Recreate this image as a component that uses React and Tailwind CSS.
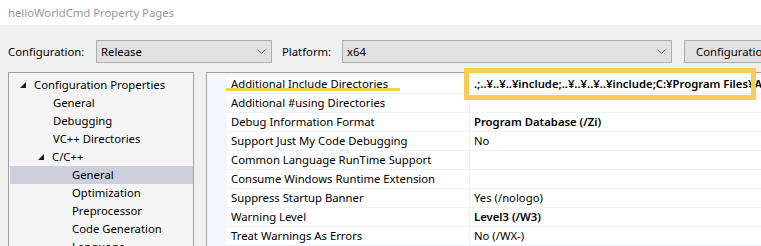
import React from 'react';

const font = { fontFamily: '"Noto Sans", "Open Sans", sans-serif' };

const tree = [
  { label: 'Configuration Properties', indent: 0, toggle: true },
  { label: 'General', indent: 1 },
  { label: 'Debugging', indent: 1 },
  { label: 'VC++ Directories', indent: 1 },
  { label: 'C/C++', indent: 1, toggle: true },
  { label: 'General', indent: 2, selected: true },
  { label: 'Optimization', indent: 2 },
  { label: 'Preprocessor', indent: 2 },
  { label: 'Code Generation', indent: 2 },
  { label: 'Language', indent: 2 },
];

const props = [
  { name: 'Additional Include Directories', value: '.;..¥..¥..¥include;..¥..¥..¥..¥include;C:¥Program Files¥Au', bold: true },
  { name: 'Additional #using Directories', value: '' },
  { name: 'Debug Information Format', value: 'Program Database (/Zi)', bold: true },
  { name: 'Support Just My Code Debugging', value: 'No' },
  { name: 'Common Language RunTime Support', value: '' },
  { name: 'Consume Windows Runtime Extension', value: '' },
  { name: 'Suppress Startup Banner', value: 'Yes (/nologo)' },
  { name: 'Warning Level', value: 'Level3 (/W3)', bold: true },
  { name: 'Treat Warnings As Errors', value: 'No (/WX-)' },
];

function Chevron() {
  return (
    <svg width="9" height="5" viewBox="0 0 9 5" className="shrink-0">
      <polyline points="0.5,0.5 4.5,4.5 8.5,0.5" fill="none" stroke="#606060" strokeWidth="1" />
    </svg>
  );
}

function Triangle() {
  return (
    <svg width="6" height="6" viewBox="0 0 6 6" className="shrink-0">
      <polygon points="6,0 6,6 0,6" fill="#1e1e1e" />
    </svg>
  );
}

export default function App() {
  return (
    <div className="w-[761px] h-[246px] overflow-hidden bg-[#f0f0f0] text-[11.3px] text-black leading-none" style={font}>
      {/* Title */}
      <div className="h-[25px] bg-white flex items-center pl-[8px] text-[#999999]">helloWorldCmd Property Pages</div>

      {/* Configuration row */}
      <div className="flex items-center h-[23px] mt-[15px] pl-[8px] whitespace-nowrap">
        <span className="w-[88px] shrink-0">Configuration:</span>
        <div className="w-[176px] h-[23px] shrink-0 bg-[#e1e1e1] border border-[#adadad] flex items-center justify-between pl-[4px] pr-[5px]">
          <span>Release</span>
          <Chevron />
        </div>
        <span className="ml-[10px] w-[60px] shrink-0">Platform:</span>
        <div className="w-[330px] h-[23px] shrink-0 bg-[#e1e1e1] border border-[#adadad] flex items-center justify-between pl-[4px] pr-[5px]">
          <span>x64</span>
          <Chevron />
        </div>
        <div className="ml-[12px] w-[130px] h-[23px] shrink-0 bg-[#e1e1e1] border border-[#adadad] flex items-center pl-[11px]">
          Configuration Manager...
        </div>
      </div>

      {/* Panels */}
      <div className="flex mt-[9px] pl-[8px] whitespace-nowrap">
        <div className="w-[186px] h-[200px] shrink-0 border border-[#a0a0a0] bg-[#f5f5f5] pt-[3px] pl-[1px]">
          {tree.map((t, i) => (
            <div
              key={i}
              className={`h-[18px] flex items-center ${t.selected ? 'bg-[#cccedb]' : ''}`}
              style={{ paddingLeft: t.indent === 0 ? 10 : t.indent === 1 ? (t.toggle ? 28 : 43) : 62 }}
            >
              {t.toggle && <span className="mr-[8px] flex"><Triangle /></span>}
              <span>{t.label}</span>
            </div>
          ))}
        </div>

        <div className="relative ml-[12px] w-[600px] h-[200px] shrink-0 border border-[#a0a0a0] bg-[#f4f6fb] pl-[20px]">
          <div className="bg-white mt-[2px] overflow-hidden">
            {props.map((p, i) => (
              <div key={i} className="h-[19px] flex border-b border-[#eef1f7]">
                <div className="w-[242px] shrink-0 flex items-center pl-[4px]">{p.name}</div>
                <div className={`flex-1 flex items-center pl-[4px] border-l border-[#eef1f7] ${p.bold ? 'font-semibold' : ''}`}>{p.value}</div>
              </div>
            ))}
          </div>

          {/* annotation: underline */}
          <div className="absolute left-[19px] top-[15px] w-[174px] h-[3px] bg-[#f9cc55]" />
          {/* annotation: box */}
          <div className="absolute left-[257px] top-[-5px] w-[292px] h-[32px] border-[5px] border-[#f9cc55]" />
        </div>
      </div>
    </div>
  );
}
